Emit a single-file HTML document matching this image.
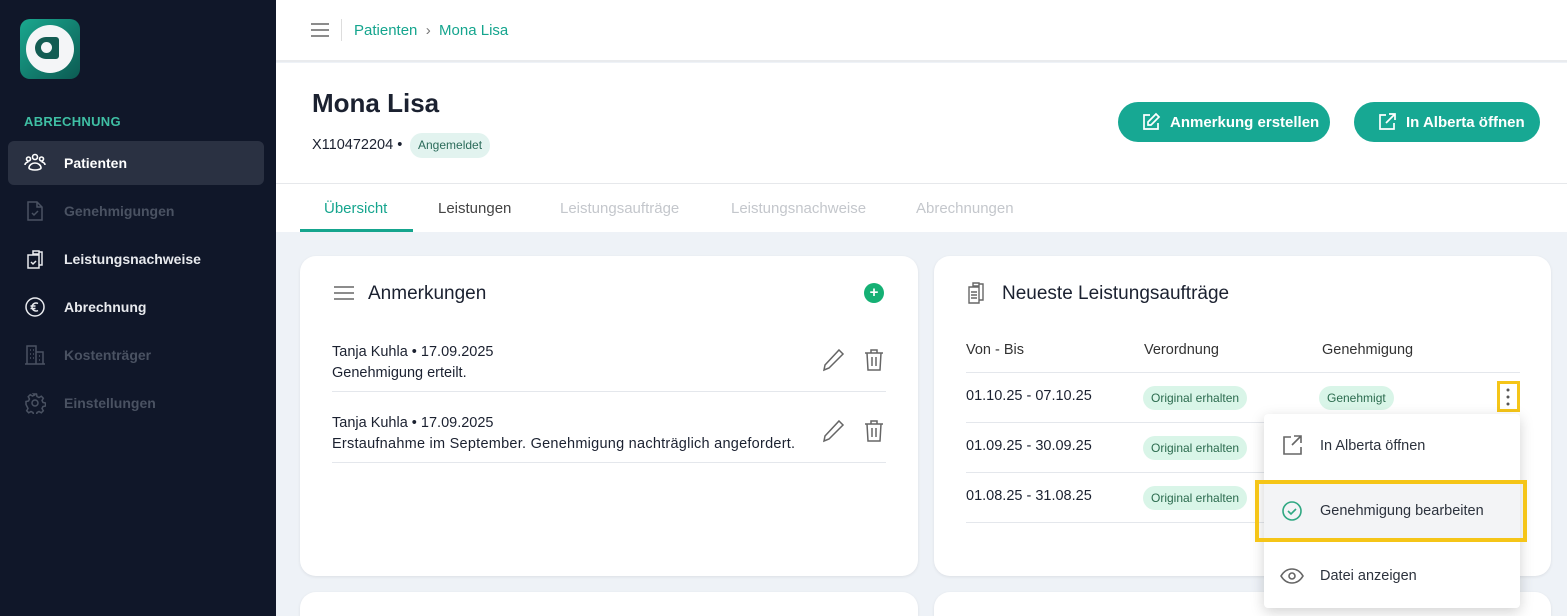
<!DOCTYPE html>
<html><head><meta charset="utf-8"><style>
*{box-sizing:border-box;margin:0;padding:0}
html,body{width:1567px;height:616px;overflow:hidden}
body{font-family:"Liberation Sans",sans-serif;background:#eef2f7;position:relative;color:#1b2130}
.sb{position:absolute;left:0;top:0;width:276px;height:616px;background:#101729}
.logo{position:absolute;left:20px;top:19px;width:60px;height:60px;border-radius:10px;background:linear-gradient(135deg,#1aa88f,#0c5a52);overflow:hidden}
.logo .c{position:absolute;left:6px;top:6px;width:48px;height:48px;border-radius:50%;background:#f4f5f7}
.logo .d{position:absolute;left:15px;top:18px;width:24px;height:22px;border-radius:11px 3px 3px 11px;background:#135c53}
.logo .e{position:absolute;left:21px;top:23px;width:11px;height:11px;border-radius:50%;background:#f4f5f7}
.sec{position:absolute;left:24px;top:114px;font-size:13px;font-weight:bold;color:#3fbfa4;letter-spacing:.3px}
.nav{position:absolute;left:8px;width:256px;height:44px;border-radius:6px;font-size:14px;font-weight:bold;display:flex;align-items:center;padding-left:56px}
.nav svg{position:absolute;left:16px;top:11px}
.on{background:#2a3142;color:#fff}
.w{color:#e8eaee}.g{color:#4a5262}
.top{position:absolute;left:276px;top:0;right:0;height:62px;background:#fff;border-bottom:2px solid #e9ebee}
.bc{position:absolute;left:354px;top:21px;font-size:15px;color:#15a58e}
.hd{position:absolute;left:276px;top:63px;right:0;height:121px;background:#fff;border-bottom:1px solid #e6e8eb}
.tabs{position:absolute;left:276px;top:184px;right:0;height:48px;background:#fff}
.tab{position:absolute;top:16px;font-size:15px}
.btn{position:absolute;top:102px;height:40px;border-radius:20px;background:#17a893;color:#fff;font-weight:bold;font-size:15px;display:flex;align-items:center;padding-left:52px}
.btn svg{position:absolute;left:23px;top:10px}
.card{position:absolute;background:#fff;border-radius:16px;box-shadow:0 1px 3px rgba(0,0,0,.08)}
.pill{position:absolute;height:24px;border-radius:12px;background:#d9f5e8;color:#2b6b4e;font-size:12px;line-height:24px;padding:0 8px}
.line{position:absolute;height:1px;background:#e4e7ec}
.t14{position:absolute;font-size:14.5px}
.menu{position:absolute;left:1264px;top:414px;width:256px;height:194px;background:#fff;border-radius:4px;box-shadow:0 4px 14px rgba(0,0,0,.18)}
.mi{position:absolute;left:56px;font-size:14.5px;color:#2c323d}
</style></head><body>
<div class="sb">
 <div class="logo"><div class="c"></div><div class="d"></div><div class="e"></div></div>
 <div class="sec">ABRECHNUNG</div>
 <div class="nav on" style="top:141px"><svg width="22" height="22" viewBox="0 0 22 22" fill="none" stroke="#fff" stroke-width="1.6"><circle cx="11" cy="5" r="2.5"/><circle cx="4.5" cy="7" r="2"/><circle cx="17.5" cy="7" r="2"/><path d="M5 16c0-3 3-5 6-5s6 2 6 5c0 1-3 2-6 2s-6-1-6-2zM1 13c0-2 2-3 3.5-3M21 13c0-2-2-3-3.5-3"/></svg>Patienten</div>
 <div class="nav g" style="top:189px"><svg width="22" height="22" viewBox="0 0 22 22" fill="none" stroke="#4a5262" stroke-width="1.5"><path d="M4 2h9l5 5v13H4zM13 2v5h5M8 13l2 2 4-4"/></svg>Genehmigungen</div>
 <div class="nav w" style="top:237px"><svg width="22" height="22" viewBox="0 0 22 22" fill="none" stroke="#e8eaee" stroke-width="1.5"><path d="M9 3h6v3H9zM15 4h3v13h-3M4 7h11v13H4zM7 14l2 2 3-3"/></svg>Leistungsnachweise</div>
 <div class="nav w" style="top:285px"><svg width="22" height="22" viewBox="0 0 22 22" fill="none" stroke="#e8eaee" stroke-width="1.5"><circle cx="11" cy="11" r="9"/><path d="M14 7.5a4 4 0 1 0 0 7M6.5 10h5M6.5 12.5h5"/></svg>Abrechnung</div>
 <div class="nav g" style="top:333px"><svg width="22" height="22" viewBox="0 0 22 22" fill="none" stroke="#4a5262" stroke-width="1.5"><path d="M3 20V2h9v18M12 8h7v12M1 20h20M6 6h1M9 6h1M6 10h1M9 10h1M6 14h1M9 14h1M15 12h1M15 16h1"/></svg>Kostenträger</div>
 <div class="nav g" style="top:381px"><svg width="22" height="22" viewBox="0 0 22 22" fill="none" stroke="#4a5262" stroke-width="1.5"><circle cx="11" cy="11" r="3"/><path d="M9.5 2h3l.5 2.5 2 1 2.3-1.3 2 2-1.3 2.3 1 2 2.5.5v3l-2.5.5-1 2 1.3 2.3-2 2-2.3-1.3-2 1-.5 2.5h-3l-.5-2.5-2-1-2.3 1.3-2-2 1.3-2.3-1-2L2 12.5v-3l2.5-.5 1-2-1.3-2.3 2-2 2.3 1.3 2-1z"/></svg>Einstellungen</div>
</div>
<div class="top">
 <svg style="position:absolute;left:35px;top:23px" width="18" height="14" viewBox="0 0 18 14" stroke="#666" stroke-width="1.6"><path d="M0 1h18M0 7h18M0 13h18"/></svg>
 <div style="position:absolute;left:65px;top:19px;width:1px;height:22px;background:#ddd"></div>
</div>
<div class="bc" style="top:22px">Patienten &nbsp;<span style="color:#777">›</span>&nbsp; Mona Lisa</div>
<div class="hd"></div>
<div style="position:absolute;left:312px;top:88px;font-size:26px;font-weight:bold;color:#1b2130">Mona Lisa</div>
<div style="position:absolute;left:312px;top:137px;font-size:14.5px">X110472204 •</div>
<div style="position:absolute;left:410px;top:133px;height:25px;border-radius:12px;background:#e2f3ef;color:#2b6b5a;font-size:12px;line-height:25px;padding:0 8px">Angemeldet</div>
<div class="btn" style="left:1118px;width:212px">
<svg width="20" height="20" viewBox="0 0 20 20" fill="none" stroke="#fff" stroke-width="1.7"><path d="M9 3H3v14h14v-6M15 2l3 3-8 8H7v-3z"/></svg>Anmerkung erstellen</div>
<div class="btn" style="left:1354px;width:186px">
<svg width="20" height="20" viewBox="0 0 20 20" fill="none" stroke="#fff" stroke-width="1.7"><path d="M9 3H3v14h14v-6M12 2h6v6M18 2l-9 9"/></svg>In Alberta öffnen</div>
<div class="tabs">
 <div class="tab" style="left:48px;color:#15a58e">Übersicht</div>
 <div style="position:absolute;left:24px;top:45px;width:113px;height:3px;background:#15a58e"></div>
 <div class="tab" style="left:162px;color:#444">Leistungen</div>
 <div class="tab" style="left:284px;color:#c4c7cc">Leistungsaufträge</div>
 <div class="tab" style="left:455px;color:#c4c7cc">Leistungsnachweise</div>
 <div class="tab" style="left:640px;color:#c4c7cc">Abrechnungen</div>
</div>
<div class="card" style="left:300px;top:256px;width:618px;height:320px"></div>
<div class="card" style="left:934px;top:256px;width:617px;height:320px"></div>
<div class="card" style="left:300px;top:592px;width:618px;height:24px;border-radius:16px 16px 0 0"></div>
<div class="card" style="left:934px;top:592px;width:617px;height:24px;border-radius:16px 16px 0 0"></div>
<svg style="position:absolute;left:334px;top:286px" width="20" height="14" stroke="#666" stroke-width="1.5"><path d="M0 1h20M0 7h20M0 13h20"/></svg>
<div style="position:absolute;left:368px;top:283px;font-size:19px">Anmerkungen</div>
<div style="position:absolute;left:864px;top:283px;width:20px;height:20px;border-radius:50%;background:#15b074;color:#fff;font-size:15px;font-weight:bold;text-align:center;line-height:20px">+</div>
<div class="t14" style="left:332px;top:344px">Tanja Kuhla • 17.09.2025</div>
<div class="t14" style="left:332px;top:365px">Genehmigung erteilt.</div>
<div class="line" style="left:332px;top:391px;width:554px"></div>
<div class="t14" style="left:332px;top:415px">Tanja Kuhla • 17.09.2025</div>
<div class="t14" style="left:332px;top:436px;letter-spacing:.25px">Erstaufnahme im September. Genehmigung nachträglich angefordert.</div>
<div class="line" style="left:332px;top:462px;width:554px"></div>
<svg style="position:absolute;left:822px;top:348px" width="24" height="24" fill="none" stroke="#666" stroke-width="1.5"><path d="M17 2l4 4L7 20l-5 2 1-5z"/></svg>
<svg style="position:absolute;left:862px;top:348px" width="24" height="24" fill="none" stroke="#666" stroke-width="1.5"><path d="M3 5h18M9 5V2h6v3M5 5l1 17h12l1-17M10 9v9M14 9v9"/></svg>
<svg style="position:absolute;left:822px;top:419px" width="24" height="24" fill="none" stroke="#666" stroke-width="1.5"><path d="M17 2l4 4L7 20l-5 2 1-5z"/></svg>
<svg style="position:absolute;left:862px;top:419px" width="24" height="24" fill="none" stroke="#666" stroke-width="1.5"><path d="M3 5h18M9 5V2h6v3M5 5l1 17h12l1-17M10 9v9M14 9v9"/></svg>
<svg style="position:absolute;left:966px;top:281px" width="20" height="24" fill="none" stroke="#666" stroke-width="1.4"><path d="M7 2h6v3H7zM13 3h4v16h-4M3 6h10v16H3zM5 11h6M5 14h6M5 17h6"/></svg>
<div style="position:absolute;left:1002px;top:283px;font-size:19px">Neueste Leistungsaufträge</div>
<div class="t14" style="left:966px;top:342px;color:#333">Von - Bis</div>
<div class="t14" style="left:1144px;top:342px;color:#333">Verordnung</div>
<div class="t14" style="left:1322px;top:342px;color:#333">Genehmigung</div>
<div class="line" style="left:966px;top:372px;width:554px"></div>
<div class="t14" style="left:966px;top:388px">01.10.25 - 07.10.25</div>
<div class="pill" style="left:1143px;top:386px">Original erhalten</div>
<div class="pill" style="left:1319px;top:386px">Genehmigt</div>
<div class="line" style="left:966px;top:422px;width:554px"></div>
<div class="t14" style="left:966px;top:438px">01.09.25 - 30.09.25</div>
<div class="pill" style="left:1143px;top:436px">Original erhalten</div>
<div class="line" style="left:966px;top:472px;width:554px"></div>
<div class="t14" style="left:966px;top:488px">01.08.25 - 31.08.25</div>
<div class="pill" style="left:1143px;top:486px">Original erhalten</div>
<div class="line" style="left:966px;top:522px;width:554px"></div>
<div style="position:absolute;left:1497px;top:381px;width:23px;height:31px;border:3px solid #f5c518"></div>
<svg style="position:absolute;left:1505px;top:388px" width="6" height="18" fill="#555"><circle cx="3" cy="2" r="1.5"/><circle cx="3" cy="9" r="1.5"/><circle cx="3" cy="16" r="1.5"/></svg>
<div class="menu">
 <svg style="position:absolute;left:17px;top:20px" width="22" height="22" fill="none" stroke="#666" stroke-width="1.6"><path d="M10 3H3v17h17v-7M13 2h7v7M20 2l-9 9"/></svg>
 <div class="mi" style="top:24px">In Alberta öffnen</div>
 <div style="position:absolute;left:0;top:70px;width:256px;height:58px;background:#f3f4f6"></div>
 <svg style="position:absolute;left:17px;top:86px" width="22" height="22" fill="none" stroke="#2fa882" stroke-width="1.6"><circle cx="11" cy="11" r="9"/><path d="M7 11l3 3 5-5"/></svg>
 <div class="mi" style="top:89px">Genehmigung bearbeiten</div>
 <svg style="position:absolute;left:16px;top:152px" width="24" height="20" fill="none" stroke="#666" stroke-width="1.6"><path d="M1 10c3-5 7-7 11-7s8 2 11 7c-3 5-7 7-11 7S4 15 1 10z"/><circle cx="12" cy="10" r="3"/></svg>
 <div class="mi" style="top:154px">Datei anzeigen</div>
</div>
<div style="position:absolute;left:1255px;top:480px;width:272px;height:62px;border:4px solid #f5c518"></div>
</body></html>
